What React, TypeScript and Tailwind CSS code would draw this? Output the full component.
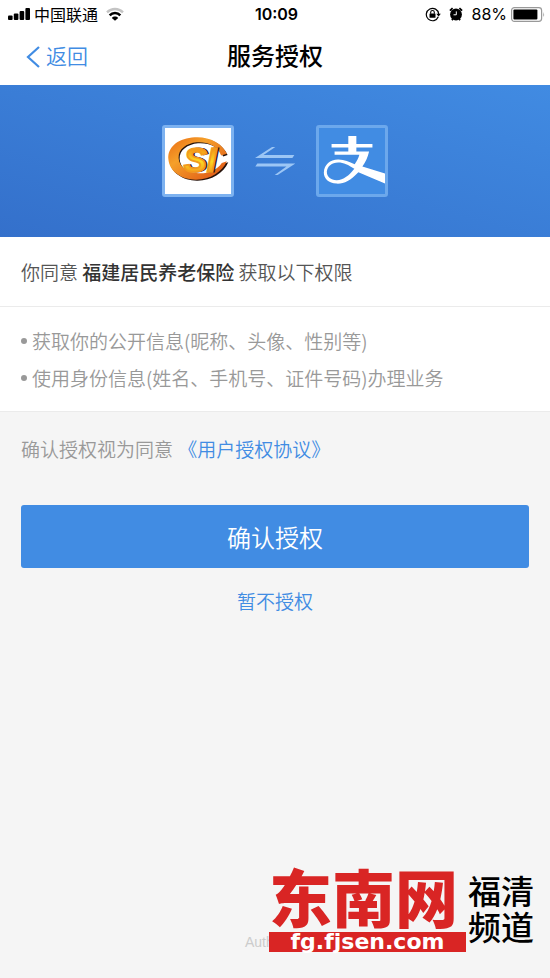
import React from 'react';

const permissions = [
  '获取你的公开信息(昵称、头像、性别等)',
  '使用身份信息(姓名、手机号、证件号码)办理业务',
];

function StatusBar() {
  return (
    <div className="grid h-7 grid-cols-[1fr_auto_1fr] items-center pr-[5px] pl-2 text-black">
      <div className="flex items-center gap-1">
        <svg className="h-3 w-[22px]" viewBox="0 0 22 12" aria-hidden="true">
          <rect x="0" y="7.500" width="4.600" height="4.500" rx="1" />
          <rect x="5.800" y="5.500" width="4.600" height="6.500" rx="1" />
          <rect x="11.600" y="3" width="4.600" height="9" rx="1" />
          <rect x="17.400" y="0" width="4.600" height="12" rx="1" />
        </svg>
        <span className="font-['Noto_Sans_CJK_SC',sans-serif] text-base leading-5">中国联通</span>
        <svg className="ml-1 h-[14px] w-[18px]" viewBox="0 0 18 14" fill="none" aria-hidden="true">
          <path d="M1 5.400C5.600.900 12.400.900 17 5.400" stroke="#c4c4c4" strokeWidth="2.400" />
          <path d="M3.700 8.300c2.900-3 7.700-3 10.600 0" stroke="#000" strokeWidth="2.600" />
          <path d="M9 13.800 5.800 10.900c1.700-1.800 4.700-1.800 6.400 0z" fill="#000" />
        </svg>
      </div>
      <time className="font-['Inter',sans-serif] text-base leading-5 font-semibold">10:09</time>
      <div className="flex items-center justify-end gap-2">
        <svg className="h-[15px] w-4" viewBox="0 0 16 15" fill="none" aria-hidden="true">
          <path d="M13.300 9.800A6.200 6.200 0 1 1 13.700 7" stroke="#000" strokeWidth="1.200" />
          <path d="M11.300 6.800h4.500l-2.200 2.800z" fill="#000" />
          <rect x="4.500" y="6.500" width="6" height="4.200" rx=".5" fill="#000" />
          <path d="M5.700 6.700V5.300a1.800 1.800 0 0 1 3.600 0v1.400" stroke="#000" strokeWidth="1.100" />
        </svg>
        <svg className="h-[14px] w-[14px]" viewBox="0 0 14 14" fill="none" aria-hidden="true">
          <circle cx="7" cy="7.500" r="5.900" fill="#000" />
          <path d="M.9 3.600 3.600 1.200M13.100 3.600l-2.700-2.400M2.900 13.200l1-1.200M11.100 13.200l-1-1.200" stroke="#000" strokeWidth="1.800" />
          <path d="M7.300 4.400v3.400H4.500" stroke="#fff" strokeWidth="1" />
        </svg>
        <span className="font-['Inter',sans-serif] text-base leading-5">88%</span>
        <svg className="-ml-1 h-[15px] w-[34px]" viewBox="0 0 34 15" fill="none" aria-hidden="true">
          <rect x=".6" y=".6" width="30" height="13.800" rx="2.800" stroke="#999" strokeWidth="1.200" />
          <rect x="2.400" y="2.400" width="24" height="10.200" rx="1" fill="#000" />
          <path d="M32.300 5v5q1.500-2.500 0-5z" fill="#999" />
        </svg>
      </div>
    </div>
  );
}

function InsuranceLogo() {
  return (
    <svg className="h-full w-full" viewBox="47 40 192 194" role="img" aria-label="福建居民养老保险">
      <defs>
        <linearGradient id="ring" x1="0" y1="0" x2="1" y2="1">
          <stop offset="0" stopColor="#ea6a14" />
          <stop offset=".35" stopColor="#f5a02a" />
          <stop offset="1" stopColor="#dc4c12" />
        </linearGradient>
        <linearGradient id="letters" x1="0" y1="0" x2="0" y2="1">
          <stop offset="0" stopColor="#ee6a10" />
          <stop offset=".55" stopColor="#fbd824" />
          <stop offset="1" stopColor="#f07a18" />
        </linearGradient>
      </defs>
      <path fill="#26130c" d="M230 119C214 84 174 65 129 71 84 75 56 101 59 135c3 37 42 61 83 60 41 0 76-22 90-54l-15 4c-15 22-44 33-69 31-34-2-58-20-59-45-1-26 23-43 54-46 32-2 62 9 74 39z" />
      <path fill="url(#ring)" d="M228 116C212 81 170 62 125 68 81 73 53 98 56 132c3 37 41 61 82 60 41 0 75-22 90-54l-15 5c-15 22-43 32-69 30-33-2-57-20-58-45-1-26 23-43 53-46 31-2 61 9 72 39z" />
      <g fontFamily="Liberation Sans, Arial, sans-serif" fontWeight="700" fontStyle="italic" fontSize="102">
        <text x="106" y="170" fill="#26130c" stroke="#26130c" strokeWidth="3">SI</text>
        <text x="101" y="168" fill="url(#letters)" stroke="#f39a1e" strokeWidth="5">SI</text>
      </g>
    </svg>
  );
}

function AlipayLogo() {
  return (
    <svg className="h-full w-full" viewBox="238 39 196 197" role="img" aria-label="支付宝" fill="#fff">
      <path d="M325 63h24v24h48v10h-48v12h38c-4 18-11 32-20 45l71 22v30l-83-35c-24 25-43 35-65 34-25-1-39-16-38-34 1-23 20-39 44-38 18 1 31 7 48 14 7-9 11-18 14-28h-74v-10h41V97h-50V87h50z" />
      <path fill="#418ce3" d="M343 161c-18-12-32-19-48-19-20 0-33 12-34 27-1 16 12 26 29 26 21 0 38-15 53-34z" />
    </svg>
  );
}

function Watermark() {
  return (
    <div className="absolute right-4 bottom-[26px] flex items-center gap-[2px]">
      <div className="w-[197px]">
        <div className="text-[63px] leading-[63px] font-black whitespace-nowrap text-[#d92524]">东南网</div>
        <div className="flex h-5 items-center justify-center bg-[#d92524] font-['DejaVu_Sans',sans-serif] text-[22px] leading-5 font-bold text-white">
          fg.fjsen.com
        </div>
      </div>
      <div className="text-[33px] leading-9 font-medium text-black">
        福清
        <br />
        频道
      </div>
    </div>
  );
}

export default function App() {
  return (
    <div className="relative flex min-h-screen flex-col bg-[#f5f5f5] font-['Liberation_Sans','Noto_Sans_CJK_SC',sans-serif]">
      <header className="bg-white">
        <StatusBar />
        <div className="grid h-[57px] grid-cols-[1fr_auto_1fr] items-center px-[26px]">
          <button type="button" className="flex items-center gap-[6px] text-[21px] leading-7 font-[350] text-[#418ce3]">
            <svg className="h-[22px] w-[14px]" viewBox="0 0 14 22" fill="none" stroke="currentColor" strokeWidth="2.200" aria-hidden="true">
              <path d="M13 1 2 11l11 10" />
            </svg>
            返回
          </button>
          <h1 className="text-2xl font-medium text-black">服务授权</h1>
        </div>
      </header>

      <section className="flex h-[152px] items-center justify-center gap-[21px] bg-linear-to-tr from-[#3470cb] to-[#418be2]">
        <div className="h-[72px] w-[72px] rounded-[3px] border-3 border-[#7db2f0] bg-white">
          <InsuranceLogo />
        </div>
        <svg className="h-[30px] w-10" viewBox="44 93 122 90" fill="#9cc6f5" aria-hidden="true">
          <path d="M96 95h10L70 120h94l-6 9H44z" />
          <path d="M51 146h116l-54 35h-9l36-26H45z" />
        </svg>
        <div className="h-[72px] w-[72px] rounded-[3px] border-3 border-[#6ca8ec] bg-[#418ce3]">
          <AlipayLogo />
        </div>
      </section>

      <main className="flex flex-1 flex-col text-[19px] leading-[37px] font-[350]">
        <section className="border-b border-[#ebebeb] bg-white font-['Noto_Sans_CJK_SC',sans-serif]">
          <p className="border-b border-[#ebebeb] px-[21px] py-4 text-[#555]">
            你同意 <strong className="font-medium text-[#333]">福建居民养老保险</strong> 获取以下权限
          </p>
          <ul className="px-[21px] py-[15px] text-[#999]">
            {permissions.map((item) => (
              <li key={item} className="flex items-center gap-[5px]">
                <span className="h-[6px] w-[6px] shrink-0 rounded-full bg-[#999]" />
                {item}
              </li>
            ))}
          </ul>
        </section>

        <div className="flex flex-col px-[21px] pt-5">
          <p className="text-[#999]">
            确认授权视为同意{' '}
            <a href="#agreement" className="text-[#418ce3]">《用户授权协议》</a>
          </p>
          <button type="button" className="mt-9 h-[63px] rounded-[3px] bg-[#418ce3] font-['Noto_Sans_CJK_SC',sans-serif] text-2xl text-white">
            确认授权
          </button>
          <button type="button" className="mt-4 self-center text-[#418ce3]">
            暂不授权
          </button>
        </div>

        <footer className="mt-auto pb-[26px] pl-[245px] text-sm leading-5 font-normal text-[#ccc]">Auth</footer>
      </main>

      <Watermark />
    </div>
  );
}
